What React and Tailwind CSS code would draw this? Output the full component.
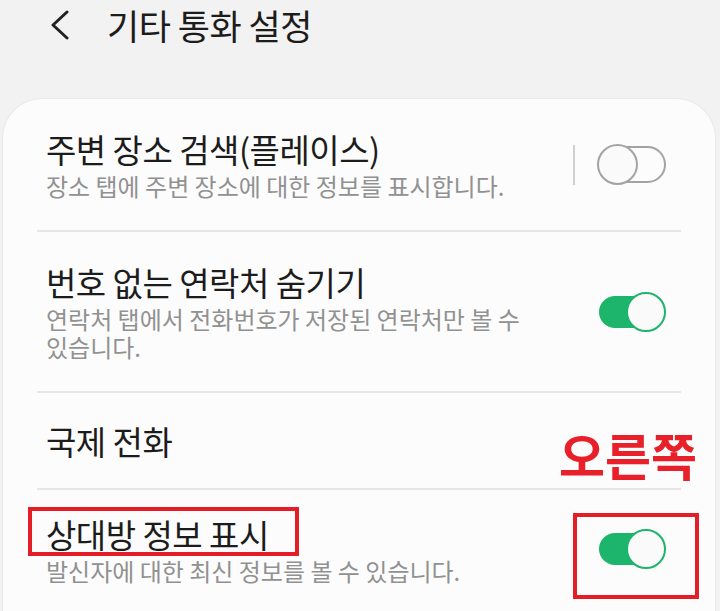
const Toggle = ({ on }) => {
  if (on) {
    return (
      <div className="relative h-[40px] w-[68px] shrink-0">
        <div className="absolute left-[1px] right-[4px] top-[4px] h-[32px] rounded-full bg-[#1db46c]" />
        <div className="absolute right-0 top-0 h-[40px] w-[40px] rounded-full border-2 border-[#1db46c] bg-[#fafafa]" />
      </div>
    );
  }
  return (
    <div className="relative h-[41px] w-[69px] shrink-0">
      <div className="absolute left-[2px] right-0 top-[2px] h-[37px] rounded-full border-2 border-[#a3a3a3]" />
      <div className="absolute left-0 top-0 h-[41px] w-[41px] rounded-full border-2 border-[#a3a3a3] bg-[#fafafa]" />
    </div>
  );
};

const Divider = () => <div className="h-[2px] bg-[#e6e6e6]" />;

const Row = ({ title, sub, height, children, className = '' }) => (
  <div className={`relative flex items-center pl-[9px] pr-[15px] ${height} ${className}`}>
    <div className="min-w-0 flex-1 pr-[30px]">
      <div className="text-[33px] leading-[40px] tracking-[-0.5px] text-[#1c1c1c]">{title}</div>
      {sub && (
        <div className="mt-[3px] max-w-[500px] break-keep text-[24px] leading-[28px] text-[#919191]">{sub}</div>
      )}
    </div>
    {children}
  </div>
);

export default function App() {
  return (
    <div
      className="h-[611px] w-[720px] overflow-hidden bg-[#f2f2f2]"
      style={{ fontFamily: '"Noto Sans CJK KR", "Noto Sans", sans-serif' }}
    >
      <div className="flex h-[98px] items-start pt-[4px]">
        <div className="flex h-[42px] items-center">
          <svg className="ml-[48px]" width="24" height="30" viewBox="0 0 24 30">
            <polyline points="19,2 5,15 19,28" fill="none" stroke="#222" strokeWidth="3" strokeLinecap="round" strokeLinejoin="round" />
          </svg>
          <span className="ml-[35px] text-[35px] leading-[42px] tracking-[-0.5px] text-[#1c1c1c]">기타 통화 설정</span>
        </div>
      </div>

      <div className="ml-[2px] mr-[4px] rounded-t-[40px] border border-b-0 border-[#e9e9e9] bg-[#fcfcfc] px-[34px]">
        <Row title="주변 장소 검색(플레이스)" sub="장소 탭에 주변 장소에 대한 정보를 표시합니다." height="h-[131px]">
          <div className="mr-[22px] h-[40px] w-[2px] bg-[#d0d0d0]" />
          <Toggle on={false} />
        </Row>
        <Divider />
        <Row title="번호 없는 연락처 숨기기" sub="연락처 탭에서 전화번호가 저장된 연락처만 볼 수 있습니다." height="h-[159px]">
          <Toggle on />
        </Row>
        <Divider />
        <Row title="국제 전화" height="h-[95px]">
          <span className="absolute right-[-16px] top-[34px] text-[50px] font-bold leading-[54px] text-[#e8202a]">
            오른쪽
          </span>
        </Row>
        <Divider />
        <Row title="상대방 정보 표시" sub="발신자에 대한 최신 정보를 볼 수 있습니다." height="h-[124px]" className="pb-[6px]">
          <div className="absolute left-[-9px] top-[17px] h-[49px] w-[271px] border-[4px] border-[#e31e26]" />
          <div className="absolute right-[-18px] top-[23px] h-[86px] w-[126px] border-[4px] border-[#e31e26]" />
          <Toggle on />
        </Row>
      </div>
    </div>
  );
}
